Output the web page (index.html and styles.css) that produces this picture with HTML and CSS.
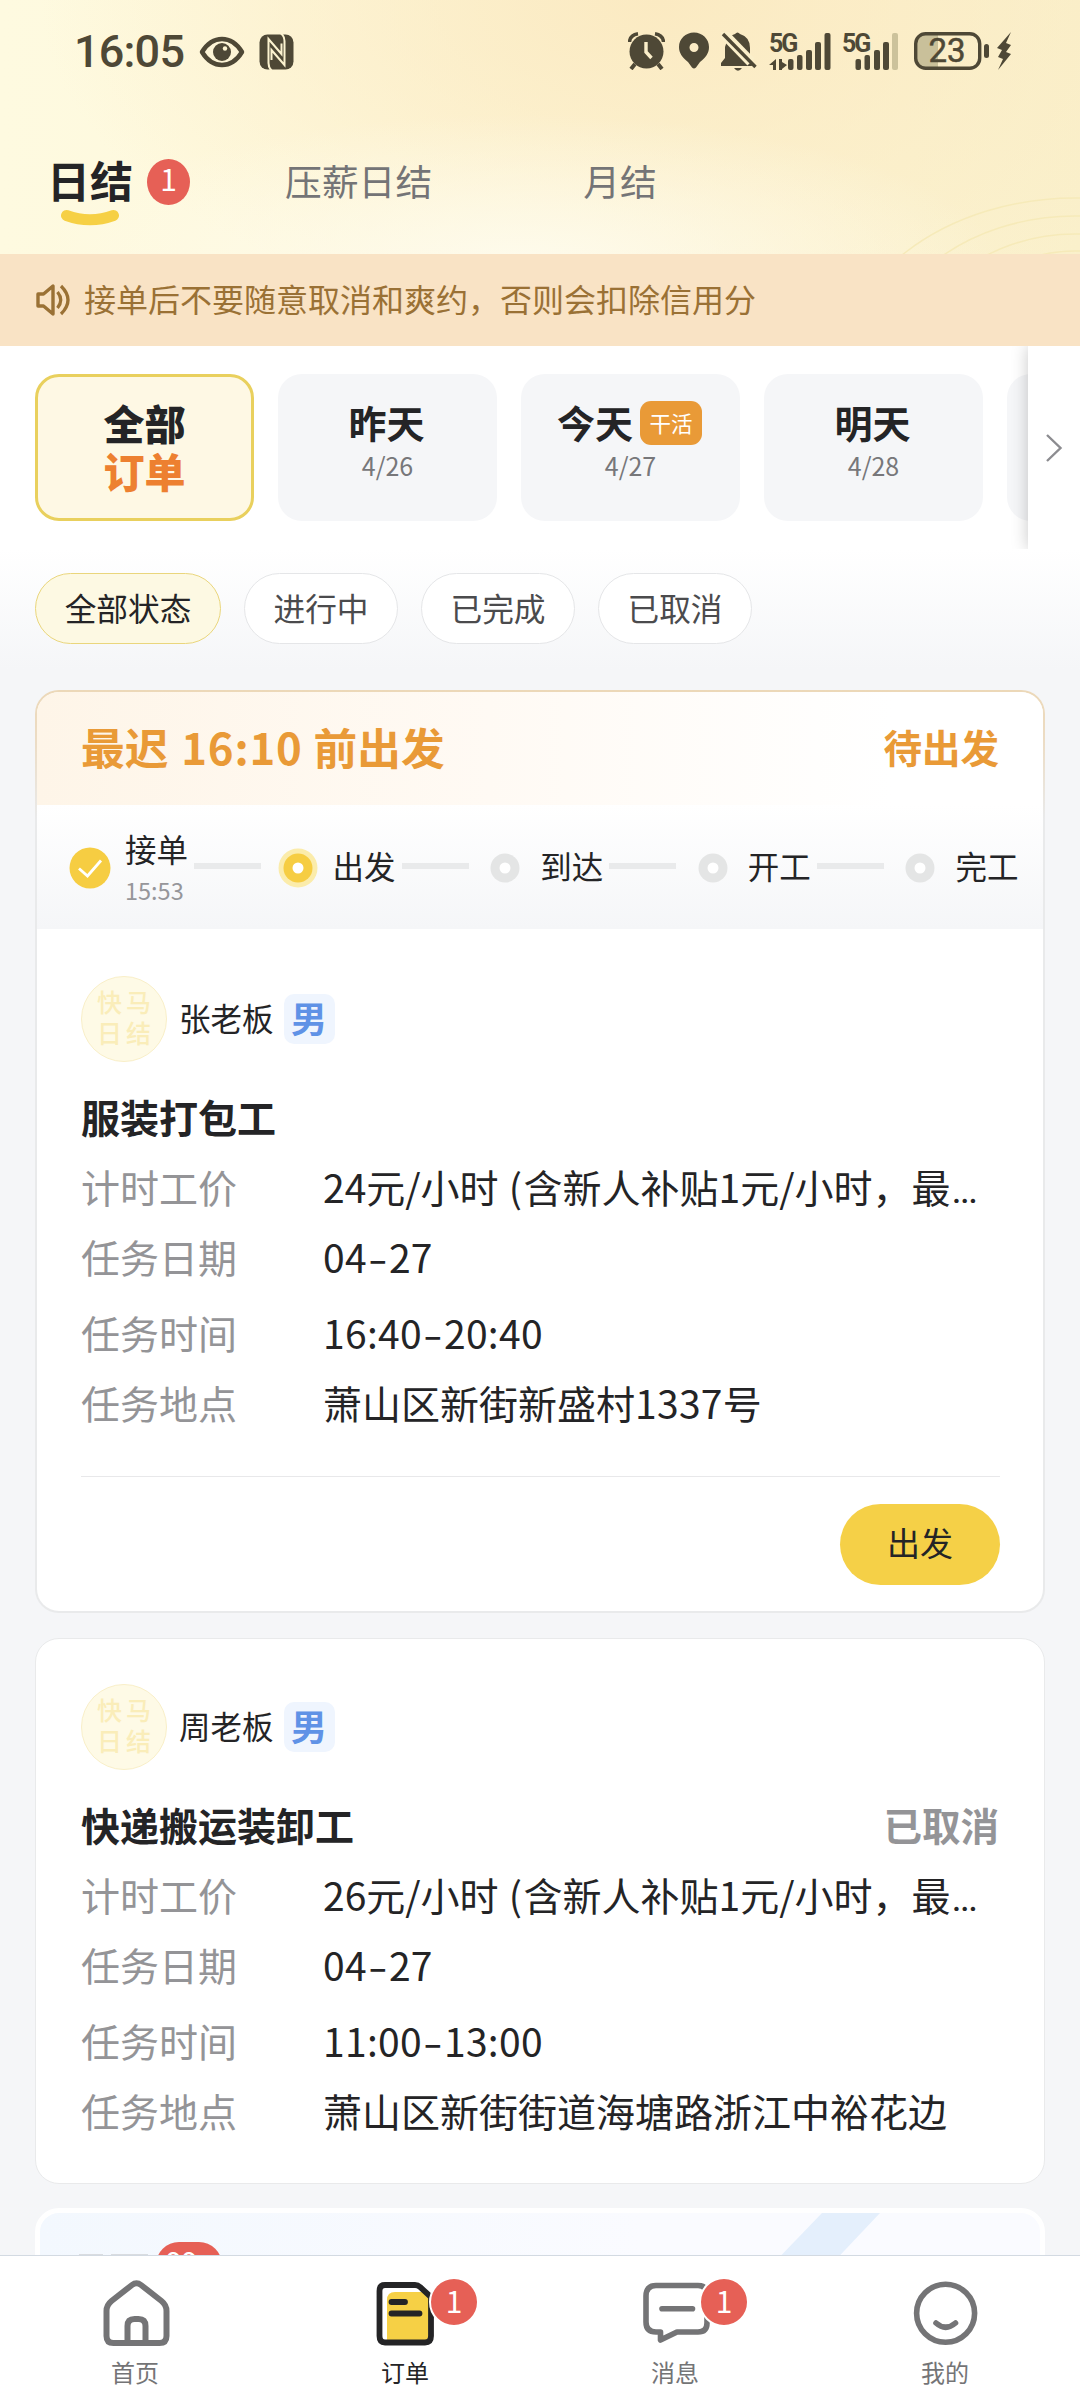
FILE: index.html
```html
<!DOCTYPE html>
<html lang="zh-CN">
<head>
<meta charset="utf-8">
<title>订单</title>
<link rel="stylesheet" href="styles.css">
</head>
<body>
<div class="screen">
  <header class="header">
    <svg class="header-rings" width="200" height="60" viewBox="0 0 200 60" fill="none" stroke="#f6eab9" stroke-width="1.5">
      <ellipse cx="195" cy="190" rx="240" ry="186"/>
      <ellipse cx="195" cy="190" rx="205" ry="168"/>
      <ellipse cx="195" cy="190" rx="172" ry="150"/>
      <ellipse cx="195" cy="190" rx="140" ry="133"/>
    </svg>
    <div class="status">
      <div class="status-left">
        <span class="clock">16:05</span>
        <svg class="eye" width="46" height="32" viewBox="0 0 46 32"><path d="M3 16Q11 3 23 3T43 16Q35 29 23 29T3 16Z" fill="none" stroke="#4e4836" stroke-width="4.5" stroke-linejoin="round"/><circle cx="23" cy="16" r="9" fill="#4e4836"/><circle cx="26" cy="12.5" r="2.2" fill="#fcf3d0"/></svg>
        <svg width="35" height="36" viewBox="0 0 35 36"><rect x=".5" y=".5" width="34" height="35" rx="8" fill="#4e4836"/><path d="M13 37Q9.500 34 9.500 29V5L22.500 20V9.500M21.500-1Q25.500 2 25.500 7V31L12.500 16V26" fill="none" stroke="#fcf3d0" stroke-width="2"/></svg>
      </div>
      <div class="status-right">
        <svg width="37" height="38" viewBox="0 0 37 38" fill="#4e4836"><circle cx="18.500" cy="19.500" r="17"/><path d="M1.500 10Q2 3 10 1.800M35.500 10Q35 3 27 1.800" fill="none" stroke="#4e4836" stroke-width="3.500"/><path d="M7 32L3 37M30 32L34 37" stroke="#4e4836" stroke-width="4"/><path d="M18 10V20L23.500 26" fill="none" stroke="#fbefca" stroke-width="3.400"/></svg>
        <svg width="30" height="37" viewBox="0 0 30 37"><path fill="#4e4836" fill-rule="evenodd" d="M15 .5C6.500 .5 0 7 0 15C0 21 3 25 9 30L13 35.500Q15 37.500 17 35.500L21 30C27 25 30 21 30 15C30 7 23.500 .5 15 .5ZM15 11A4.500 4.500 0 1 1 15 20A4.500 4.500 0 1 1 15 11Z"/></svg>
        <svg width="36" height="41" viewBox="0 0 36 41"><path fill="#4e4836" d="M7 6Q10 3 14 2Q16.500-1 19 2Q29 5 29 16V27L31 34H0V31L4 26V15ZM13 36H21Q17 41.500 13 36Z"/><path d="M0-1L30 30" stroke="#fbefca" stroke-width="10"/><path d="M2 2L34.500 35" stroke="#4e4836" stroke-width="3.400"/></svg>
        <svg class="signal" width="62" height="40" viewBox="0 0 62 40" fill="#4e4836"><text x="0" y="20" class="net">5G</text><path d="M0 33L7 27V38H4V33ZM10 27H13V30L18 33L13 37V38H10Z"/><rect x="19" y="27" width="5.500" height="11" rx="2"/><rect x="28" y="23" width="5.500" height="15" rx="2"/><rect x="37" y="18" width="6" height="20" rx="2"/><rect x="46" y="10" width="6" height="28" rx="2"/><rect x="55.500" y="1" width="6" height="37" rx="2"/></svg>
        <svg class="signal" width="57" height="40" viewBox="0 0 57 40" fill="#4e4836"><text x="0" y="20" class="net">5G</text><rect x="13.500" y="27" width="5.500" height="11" rx="2"/><rect x="22.500" y="23" width="5.500" height="15" rx="2"/><rect x="32" y="18" width="6" height="20" rx="2"/><rect x="41" y="10" width="6" height="28" rx="2"/><rect x="50" y="1" width="6" height="37" rx="2" fill="#ccc29b"/></svg>
        <svg width="76" height="38" viewBox="0 0 76 38"><path d="M12 3H24V35H12Q3 35 3 26V12Q3 3 12 3Z" fill="#c9c09a"/><rect x="1.700" y="1.700" width="64" height="34.600" rx="10" fill="none" stroke="#4e4836" stroke-width="3.400"/><rect x="70" y="12" width="5" height="14" rx="2.500" fill="#4e4836"/><text x="33" y="30" text-anchor="middle" class="charge">23</text></svg>
        <svg class="bolt" width="15" height="39" viewBox="0 0 15 39"><path d="M14 0L0 16L5 18L1 25L6 27L1 38L14 22L9 20L14 13L9 11Z" fill="#4e4836"/></svg>
      </div>
    </div>
    <div class="tabs">
      <div class="tab tab-on"><span>日结</span><svg class="smile" width="60" height="18" viewBox="0 0 60 18"><path d="M6.500 6.500Q30 15 53.500 6.500" fill="none" stroke="#f6d045" stroke-width="11" stroke-linecap="round"/></svg></div>
      <span class="tab-count">1</span>
      <div class="tab tab-second">压薪日结</div>
      <div class="tab tab-third">月结</div>
    </div>
  </header>

  <div class="notice">
    <svg width="36" height="34" viewBox="0 0 36 34" fill="none" stroke="#9a7135" stroke-width="3.400" stroke-linejoin="round"><path d="M3 11H8.500L18 3V31L8.500 23H3Z"/><path d="M22.500 9Q29 17 22.500 25M26 3Q40 17 26 31" stroke-width="3.200"/></svg>
    <span>接单后不要随意取消和爽约，否则会扣除信用分</span>
  </div>

  <div class="dates">
    <div class="date-list">
      <div class="date date-on"><b>全部</b><b class="orange">订单</b></div>
      <div class="date"><div class="day">昨天</div><small>4/26</small></div>
      <div class="date"><div class="day">今天<span class="work">干活</span></div><small>4/27</small></div>
      <div class="date"><div class="day">明天</div><small>4/28</small></div>
      <div class="date"></div>
    </div>
    <div class="date-more"><svg width="18" height="30" viewBox="0 0 18 30"><path d="M2 2L15.500 15L2 28" fill="none" stroke="#8c8c90" stroke-width="2.400"/></svg></div>
  </div>

  <div class="filters">
    <span class="chip chip-on">全部状态</span><span class="chip">进行中</span><span class="chip">已完成</span><span class="chip">已取消</span>
  </div>

  <main class="orders">
    <article class="card card-active">
      <div class="deadline"><span class="deadline-text">最迟 <i>16:10</i> 前出发</span><span class="state">待出发</span></div>
      <div class="steps">
        <div class="step"><svg width="42" height="42" viewBox="0 0 42 42"><circle cx="21" cy="21" r="20.500" fill="#f6cd42"/><path d="M10 21.500L18.500 29L32 13.500" fill="none" stroke="#fff" stroke-width="2.800"/></svg><div class="step-name">接单<small>15:53</small></div><span class="bar"></span></div>
        <div class="step"><svg width="42" height="42" viewBox="0 0 42 42"><circle cx="21" cy="21" r="19.500" fill="#fbecab"/><circle cx="21" cy="21" r="14.500" fill="#f6cd42"/><circle cx="21" cy="21" r="5.500" fill="#fff"/></svg><div class="step-name">出发</div><span class="bar"></span></div>
        <div class="step"><svg width="42" height="42" viewBox="0 0 42 42"><circle cx="21" cy="21" r="14.500" fill="#e4e5e5"/><circle cx="21" cy="21" r="5.500" fill="#fff"/></svg><div class="step-name">到达</div><span class="bar"></span></div>
        <div class="step"><svg width="42" height="42" viewBox="0 0 42 42"><circle cx="21" cy="21" r="14.500" fill="#e4e5e5"/><circle cx="21" cy="21" r="5.500" fill="#fff"/></svg><div class="step-name">开工</div><span class="bar"></span></div>
        <div class="step"><svg width="42" height="42" viewBox="0 0 42 42"><circle cx="21" cy="21" r="14.500" fill="#e4e5e5"/><circle cx="21" cy="21" r="5.500" fill="#fff"/></svg><div class="step-name">完工</div></div>
      </div>
      <div class="body">
        <div class="boss"><div class="avatar"><span>快马</span><span>日结</span></div><span class="name">张老板</span><span class="sex">男</span></div>
        <div class="job"><span>服装打包工</span></div>
        <dl class="info">
          <div><dt>计时工价</dt><dd>24元/小时<span class="paren"> (</span>含新人补贴1元/小时，最<span class="dots">...</span></dd></div>
          <div><dt>任务日期</dt><dd class="num">04<span class="dash">-</span>27</dd></div>
          <div class="row-time"><dt>任务时间</dt><dd class="num">16:40<span class="dash">-</span>20:40</dd></div>
          <div><dt>任务地点</dt><dd>萧山区新街新盛村<span class="num">1337</span>号</dd></div>
        </dl>
        <div class="actions"><span class="go">出发</span></div>
      </div>
    </article>

    <article class="card">
      <div class="body">
        <div class="boss"><div class="avatar"><span>快马</span><span>日结</span></div><span class="name">周老板</span><span class="sex">男</span></div>
        <div class="job"><span>快递搬运装卸工</span><span class="cancelled">已取消</span></div>
        <dl class="info">
          <div><dt>计时工价</dt><dd>26元/小时<span class="paren"> (</span>含新人补贴1元/小时，最<span class="dots">...</span></dd></div>
          <div><dt>任务日期</dt><dd class="num">04<span class="dash">-</span>27</dd></div>
          <div class="row-time"><dt>任务时间</dt><dd class="num">11:00<span class="dash">-</span>13:00</dd></div>
          <div><dt>任务地点</dt><dd>萧山区新街街道海塘路浙江中裕花边</dd></div>
        </dl>
      </div>
    </article>

    <article class="card promo">
      <svg class="promo-stripe" width="140" height="70" viewBox="0 0 140 70"><path d="M60 0H118L66 55H7Z" fill="#e4effc"/></svg>
      <span class="promo-mark"></span><span class="promo-mark promo-mark-wide"></span><span class="promo-count">99+</span>
    </article>
  </main>

  <nav class="nav">
    <div class="nav-item"><svg width="90" height="76" viewBox="0 0 90 76" fill="none" stroke="#747476" stroke-width="6"><path d="M16.500 61V36Q16.500 30 21.500 26L42 10Q46.500 6.500 51 10L71.500 26Q76.500 30 76.500 36V61Q76.500 68 69.500 68H23.500Q16.500 68 16.500 61Z"/><path d="M37.500 68V51Q37.500 44 44.500 44H48.500Q55.500 44 55.500 51V68"/></svg><span>首页</span></div>
    <div class="nav-item nav-on"><svg width="90" height="76" viewBox="0 0 90 76" fill="none"><path d="M27 66V25Q27 17 35 17H63L69 24V66Z" fill="#f6d045"/><path d="M25 10H55Q58 10 60 12L71 22V61Q71 67.500 65 67.500H25Q19.500 67.500 19.500 61V16Q19.500 10 25 10Z" stroke="#242426" stroke-width="5.800"/><path d="M31.500 27H45M31.500 38.500H59.500" stroke="#242426" stroke-width="5.800" stroke-linecap="round"/></svg><span>订单</span><b class="nav-count">1</b></div>
    <div class="nav-item"><svg width="90" height="76" viewBox="0 0 90 76" fill="none" stroke="#747476" stroke-width="5.600"><path d="M26 10.500H68Q77 10.500 77 20V48Q77 57 68 57H47L30.500 65V57H26Q16 57 16 47V21Q16 10.500 26 10.500Z" stroke-linejoin="round"/><path d="M32 33.700H62.500" stroke-linecap="round"/></svg><span>消息</span><b class="nav-count">1</b></div>
    <div class="nav-item"><svg width="90" height="76" viewBox="0 0 90 76" fill="none" stroke="#747476" stroke-width="5.600"><circle cx="45.600" cy="38.300" r="29"/><path d="M36 48Q45.600 56.500 55.500 48" stroke-linecap="round"/></svg><span>我的</span></div>
  </nav>
</div>
</body>
</html>
```
FILE: styles.css
```css
* { box-sizing: border-box; }
body { margin: 0; background: #f5f6f8; font-family: "Noto Sans CJK SC", sans-serif; color: #242426; }
svg { display: block; flex: none; }
.screen { width: 1080px; height: 2400px; display: flex; flex-direction: column; overflow: hidden; }

.header { position: relative; flex: none; height: 254px; overflow: hidden;
  background:
    radial-gradient(ellipse 480px 150px at 520px 264px, #fefbec 0%, rgba(254,251,236,0) 100%),
    radial-gradient(ellipse 620px 330px at 660px 0, #fbeac2 0%, rgba(251,234,194,0) 100%),
    linear-gradient(90deg, #fefae0 0%, #fef8dc 35%, #faf0cb 100%); }
.header-rings { position: absolute; right: 0; bottom: 0; }
.status { position: relative; display: flex; justify-content: space-between; height: 102px; padding: 31px 68px 0 74px; }
.status-left { display: flex; align-items: flex-start; gap: 14px; padding-top: 3px; }
.clock { font: 500 45px/36px Roboto, sans-serif; width: 111px; letter-spacing: -.8px; color: #4e4836; white-space: nowrap; }
.eye { margin-top: 2px; }
.status-right { display: flex; align-items: flex-start; padding-top: 1px; }
.status-right svg { margin-right: 14px; }
.status-right svg:nth-child(2) { margin-right: 12px; }
.status-right svg:nth-child(3) { margin-right: 12px; }
.status-right .signal { margin-right: 11px; }
.status-right .signal + .signal { margin-right: 15px; }
.status-right svg:nth-child(6) { margin-right: 7px; }
.status-right svg:last-child { margin-right: 0; }
.signal { overflow: visible; }
.net { font: 700 25px Roboto, sans-serif; letter-spacing: -2px; }
.charge { font: 400 33px Roboto, sans-serif; fill: #4e4836; stroke: #4e4836; stroke-width: .5px; }

.tabs { position: relative; display: flex; padding-left: 47px; height: 152px; padding-top: 49px; }
.tab { font-size: 36.800px; line-height: 56px; color: #747476; padding-top: 1px; white-space: nowrap; }
.tab-on { position: relative; width: 86px; padding: 0; font-size: 43px; font-weight: 700; color: #242426; }
.smile { position: absolute; left: 13px; top: 58px; }
.tab-count { width: 43px; height: 46px; margin: 8px 0 0 14px; border-radius: 50%; background: #e66056; color: #fff; font-size: 30px; line-height: 38px; text-align: center; }
.tab-second { margin-left: 95px; }
.tab-third { margin-left: 151px; }

.notice { flex: none; height: 92px; padding-left: 35px; display: flex; align-items: center; gap: 13px; background: #f9e3c5; color: #9a7135; font-size: 32px; line-height: 60px; }
.notice span { margin-top: -4px; }

.dates { flex: none; position: relative; height: 203px; background: #fff; overflow: hidden; }
.date-list { display: flex; gap: 24px; padding: 28px 0 0 35px; }
.date { flex: none; width: 219px; height: 147px; border-radius: 24px; background: #f5f6f8; text-align: center; padding-top: 21px; }
.date-on { border: 3px solid #e9d05d; background: #fef8e4; padding-top: 21px; }
.date b { display: block; font-size: 41px; line-height: 48px; font-weight: 900; }
.date .orange { color: #ed8030; }
.day { display: flex; justify-content: center; gap: 7px; font-size: 38px; line-height: 54px; font-weight: 700; position: relative; left: -1px; }
.work { width: 62px; height: 44px; margin-top: 6px; border-radius: 11px; background: #e99a37; color: #fff; font-size: 21.500px; line-height: 44px; font-weight: 400; }
.date small { display: block; font-size: 25px; line-height: 33px; color: #77777a; }
.date-more { position: absolute; right: 0; top: 0; width: 52px; height: 203px; background: #fff; box-shadow: 0 0 16px rgba(0,0,0,.22); display: flex; align-items: center; padding-left: 17px; }

.filters { flex: none; display: flex; gap: 23px; height: 141px; padding: 24px 0 0 35px; background: linear-gradient(#fff, #f5f6f8 85%); }
.chip { width: 154px; height: 71px; border: 1px solid #e5e6e8; border-radius: 36px; background: #fff; color: #4b4b4d; font-size: 31.700px; line-height: 66px; text-align: center; white-space: nowrap; }
.chip-on { width: 186px; border-color: #ead67c; background: #fdf9e3; color: #242426; }

.orders { flex: 1; min-height: 0; overflow: hidden; padding: 0 35px; }
.card { position: relative; background: #fff; border: 1px solid #e9eaeb; border-radius: 24px; margin-bottom: 24px; height: 546px; overflow: hidden; }
.card-active { height: 923px; margin-bottom: 25px; border: 2px solid transparent; background: linear-gradient(#fff, #fff) padding-box, linear-gradient(#ecd8b8 0, #ecdcc4 50px, #e9eaeb 130px) border-box; }
.deadline { display: flex; justify-content: space-between; align-items: center; height: 113px; padding: 0 44px 5px 44px; background: linear-gradient(90deg, #fef5e8, #fffaf4 45%, #fff 85%); color: #e99a37; font-weight: 700; }
.deadline-text { font-size: 43.700px; line-height: 80px; margin-top: -1px; }
.deadline-text i { font-style: normal; letter-spacing: .8px; margin: 0 1px 0 3px; }
.state { font-size: 38.500px; }
.steps { display: flex; height: 124px; padding-left: 32px; background: linear-gradient(#fff, #f5f6f8); }
.step { display: flex; align-items: center; width: 207.600px; flex: none; }
.step svg { margin-top: 2px; }
.step:last-child { width: 165px; }
.step-name { position: relative; width: 63px; margin-left: 14px; font-size: 31.500px; line-height: 48px; margin-top: -4px; }
.step-name small { display: block; font-size: 23.500px; line-height: 36px; color: #96969a; }
.bar { width: 67px; height: 6px; margin: -2px 0 0 6px; background: #e9eaeb; }
.step:first-child .step-name { margin-top: -3px; }

.body { padding: 47px 43px 0 44px; }
.card:not(.card-active) .body { padding: 45px 45px 0 45px; }
.boss { display: flex; align-items: center; height: 86px; }
.avatar { width: 86px; height: 86px; border: 1px solid #f9efc8; border-radius: 50%; background: #fefae6; color: #faedb9; font-size: 25px; font-weight: 500; text-align: center; padding-top: 9px; }
.avatar span { display: block; line-height: 31px; letter-spacing: 4px; margin-right: -4px; }
.name { font-size: 31.500px; line-height: 50px; margin: -4px 10px 0 12px; }
.sex { width: 51px; height: 50px; border-radius: 10px; background: #eff5fe; color: #5f92e6; font-size: 36px; font-weight: 700; line-height: 46px; text-align: center; }
.job { display: flex; justify-content: space-between; margin-top: 24px; font-size: 39px; font-weight: 700; line-height: 60px; }
.cancelled { color: #949497; font-size: 38.500px; }
.info { margin: 10px 0 0; display: flex; flex-direction: column; gap: 10px; font-size: 39px; line-height: 60px; white-space: nowrap; }
.info > div { display: flex; height: 60px; }
.info .row-time { margin-top: 6px; }
dt { width: 242px; color: #949497; }
dd { margin: 0; }
.num { letter-spacing: .3px; }
.paren { letter-spacing: 1.500px; }
.dots { font-family: Roboto, sans-serif; letter-spacing: -2px; margin-left: 1px; }
.dash { display: inline-block; width: 22px; text-align: center; transform: scaleX(1.450); }
.actions { display: flex; justify-content: flex-end; margin-top: 44px; padding-top: 27px; border-top: 1px solid #e8e8ea; }
.go { width: 160px; height: 81px; border-radius: 41px; background: #f5d047; text-align: center; font-size: 33px; line-height: 76px; }

.promo { height: 200px; border: 5px solid #fff; background: linear-gradient(90deg, #f3f8fe, #fafbff 60%); display: flex; gap: 8px; padding: 29px 0 0 39px; }
.promo-stripe { position: absolute; left: 722px; top: 0; }
.promo-mark { width: 24px; height: 3px; margin-top: 12px; background: #d9dce0; flex: none; }
.promo-mark-wide { width: 37px; }
.promo-count { position: relative; width: 66px; height: 46px; border-radius: 23px; background: #e66056; color: #fff; font-size: 30px; line-height: 38px; text-align: center; letter-spacing: -1px; }

.nav { position: relative; flex: none; display: flex; height: 145px; background: #fff; border-top: 1px solid #d3dae2; }
.nav-item { position: relative; width: 270px; display: flex; flex-direction: column; align-items: center; padding-top: 19px; color: #747476; font-size: 24px; line-height: 40px; }
.nav-item span { margin-top: 1px; }
.nav-on { color: #242426; }
.nav-count { position: absolute; left: 159px; top: 21px; width: 50px; height: 50px; border: 2px solid #fff; border-radius: 50%; background: #e66056; color: #fff; font-weight: 400; font-size: 30px; line-height: 42px; text-align: center; }
```
